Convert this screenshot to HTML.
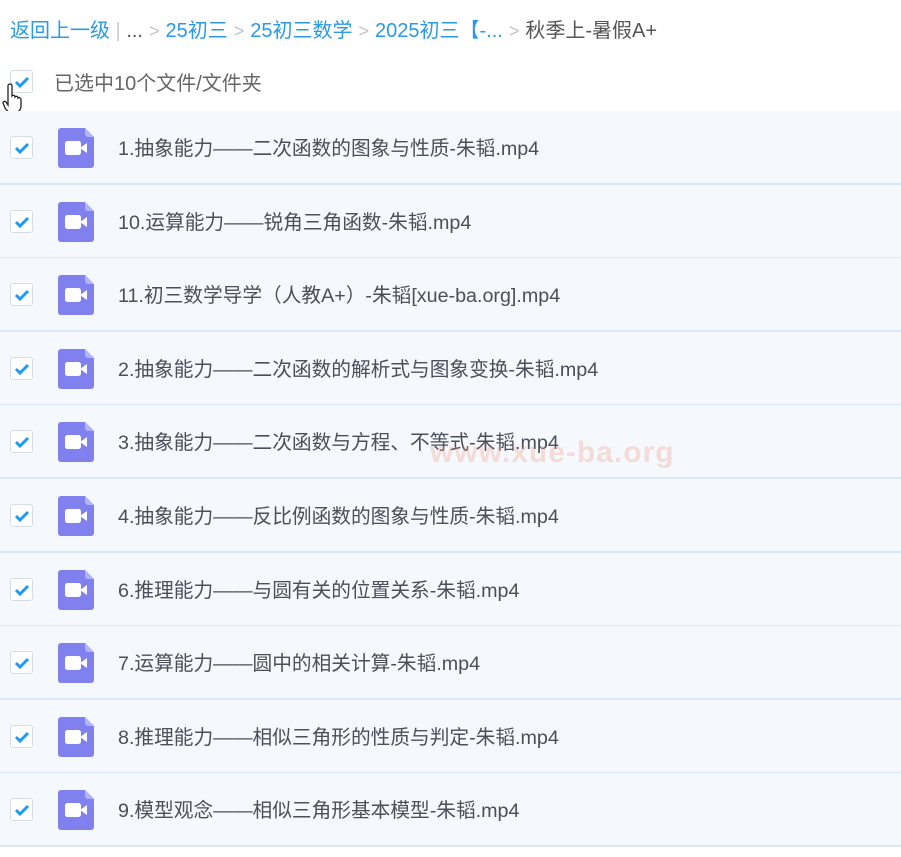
<!DOCTYPE html>
<html><head><meta charset="utf-8"><style>
body{margin:0;width:901px;height:857px;background:#fff;font-family:"Liberation Sans","Noto Sans CJK SC",sans-serif;position:relative;overflow:hidden}
.bc{position:absolute;left:10px;top:14px;font-size:20px;color:#2a9ae6;white-space:nowrap}
.bc .g{color:#c0c4cc;margin:0 6px;font-size:18px}
.bc .c{color:#555}
.sel{position:absolute;left:54px;top:67px;font-size:20px;color:#666}
.cb{position:absolute;width:23px;height:23px;border:1px solid #d6dde5;border-radius:3px;background:#fff;box-sizing:border-box}
.cb svg{position:absolute;left:3px;top:4px}
.row{position:absolute;left:0;width:901px;height:72px;background:#f5f9fd;border-bottom:2px solid #dbe9f7}
.row .t{position:absolute;left:118px;top:21px;font-size:19.7px;color:#4a4f58;white-space:nowrap}
.ic{position:absolute;left:58px;top:17px}
.wm{position:absolute;left:430px;top:436px;font-size:30px;font-weight:bold;color:rgba(240,150,130,.3);font-family:"Liberation Sans",sans-serif;letter-spacing:1px}
</style></head><body>
<div class="bc">返回上一级<span style="color:#ccc"> | </span><span class="c">...</span><span class="g">&gt;</span>25初三<span class="g">&gt;</span>25初三数学<span class="g">&gt;</span>2025初三【-...<span class="g">&gt;</span><span class="c">秋季上-暑假A+</span></div>
<div class="cb" style="left:10px;top:70px"><svg width="16" height="14"><path d="M2 7l4 4 8-8" stroke="#1e9bf0" stroke-width="3" fill="none"/></svg></div>
<div class="sel">已选中10个文件/文件夹</div>
<svg style="position:absolute;left:2px;top:82px" width="24" height="34"><path d="M8 2c1.5 0 2 1 2 2v10c1-1 3-1 3 1 1-1 3-1 3 1 1-1 3 0 3 2v6c0 4-3 7-7 7h-2c-3 0-5-2-7-5l-2-5c0-2 2-2 3-1l2 3V4c0-1 .5-2 2-2z" fill="#fff" stroke="#222" stroke-width="1.3"/></svg>
<div id="rows"></div>
<div class="wm">www.xue-ba.org</div>
<script>
var n=["1.抽象能力——二次函数的图象与性质-朱韬.mp4","10.运算能力——锐角三角函数-朱韬.mp4","11.初三数学导学（人教A+）-朱韬[xue-ba.org].mp4","2.抽象能力——二次函数的解析式与图象变换-朱韬.mp4","3.抽象能力——二次函数与方程、不等式-朱韬.mp4","4.抽象能力——反比例函数的图象与性质-朱韬.mp4","6.推理能力——与圆有关的位置关系-朱韬.mp4","7.运算能力——圆中的相关计算-朱韬.mp4","8.推理能力——相似三角形的性质与判定-朱韬.mp4","9.模型观念——相似三角形基本模型-朱韬.mp4"];
var h="";n.forEach(function(t,i){var y=Math.round(111+i*73.6);h+='<div class="row" style="top:'+y+'px"><div class="cb" style="left:10px;top:25px"><svg width="16" height="14"><path d="M2 7l4 4 8-8" stroke="#1e9bf0" stroke-width="3" fill="none"/></svg></div><svg class="ic" width="36" height="40"><path d="M3 0h24l9 9v28a3 3 0 0 1-3 3H3a3 3 0 0 1-3-3V3a3 3 0 0 1 3-3z" fill="#8080ef"/><path d="M27 0v6a3 3 0 0 0 3 3h6z" fill="#b3b3f7"/><rect x="7" y="13" width="16" height="14" rx="2.5" fill="#fff"/><path d="M22 20l7-5v10l-7-5z" fill="#fff"/></svg><div class="t">'+t+'</div></div>';});
document.getElementById("rows").innerHTML=h;
</script>
</body></html>
